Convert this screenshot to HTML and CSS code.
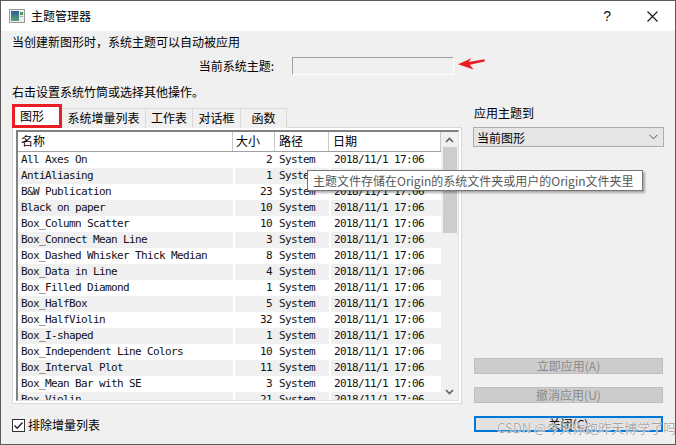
FILE: index.html
```html
<!DOCTYPE html>
<html lang="zh-CN">
<head>
<meta charset="utf-8">
<title>主题管理器</title>
<link rel="stylesheet" href="styles.css">
</head>
<body>
<div class="window">
  <div class="titlebar">
    <svg class="app-icon" width="16" height="14" viewBox="0 0 16 14">
      <defs>
        <linearGradient id="g1" x1="0" y1="0" x2="0" y2="1">
          <stop offset="0" stop-color="#2f5f8f"/>
          <stop offset="1" stop-color="#5aa27a"/>
        </linearGradient>
      </defs>
      <rect x="0.5" y="0.5" width="15" height="13" fill="#ececec" stroke="#9a9a9a"/>
      <rect x="2" y="2" width="8" height="10" fill="url(#g1)"/>
      <rect x="11" y="3" width="3" height="3" fill="#4f9d5a"/>
      <rect x="11" y="7" width="3" height="1" fill="#9ab"/>
    </svg>
    <span class="title">主题管理器</span>
    <span class="help">?</span>
    <svg class="close-x" width="11" height="11" viewBox="0 0 11 11">
      <path d="M0.5 0.5 L10.5 10.5 M10.5 0.5 L0.5 10.5" stroke="#111" stroke-width="1.1" fill="none"/>
    </svg>
  </div>

  <div class="content">
    <div class="line1">当创建新图形时，系统主题可以自动被应用</div>
    <div class="current-row">
      <span class="label">当前系统主题:</span>
      <div class="field"></div>
    </div>
    <div class="line3">右击设置系统竹筒或选择其他操作。</div>

    <div class="main">
      <div class="left">
        <div class="tabs">
          <div class="tab tab-active">图形</div>
          <div class="tab tab-2">系统增量列表</div>
          <div class="tab tab-3">工作表</div>
          <div class="tab tab-4">对话框</div>
          <div class="tab tab-5">函数</div>
        </div>
        <div class="panel">
          <div class="list">
            <div class="table">
              <div class="header">
                <div class="hcell">名称</div>
                <div class="hcell">大小</div>
                <div class="hcell hpath">路径</div>
                <div class="hcell hpath">日期</div>
              </div>
              <div class="row"><span class="c-name">All Axes On</span><span class="c-size">2</span><span class="c-path">System</span><span class="c-date">2018/11/1 17:06</span></div>
              <div class="row"><span class="c-name">AntiAliasing</span><span class="c-size">1</span><span class="c-path">System</span><span class="c-date">2018/11/1 17:06</span></div>
              <div class="row"><span class="c-name">B&amp;W Publication</span><span class="c-size">23</span><span class="c-path">System</span><span class="c-date">2018/11/1 17:06</span></div>
              <div class="row"><span class="c-name">Black on paper</span><span class="c-size">10</span><span class="c-path">System</span><span class="c-date">2018/11/1 17:06</span></div>
              <div class="row"><span class="c-name">Box_Column Scatter</span><span class="c-size">10</span><span class="c-path">System</span><span class="c-date">2018/11/1 17:06</span></div>
              <div class="row"><span class="c-name">Box_Connect Mean Line</span><span class="c-size">3</span><span class="c-path">System</span><span class="c-date">2018/11/1 17:06</span></div>
              <div class="row"><span class="c-name">Box_Dashed Whisker Thick Median</span><span class="c-size">8</span><span class="c-path">System</span><span class="c-date">2018/11/1 17:06</span></div>
              <div class="row"><span class="c-name">Box_Data in Line</span><span class="c-size">4</span><span class="c-path">System</span><span class="c-date">2018/11/1 17:06</span></div>
              <div class="row"><span class="c-name">Box_Filled Diamond</span><span class="c-size">1</span><span class="c-path">System</span><span class="c-date">2018/11/1 17:06</span></div>
              <div class="row"><span class="c-name">Box_HalfBox</span><span class="c-size">5</span><span class="c-path">System</span><span class="c-date">2018/11/1 17:06</span></div>
              <div class="row"><span class="c-name">Box_HalfViolin</span><span class="c-size">32</span><span class="c-path">System</span><span class="c-date">2018/11/1 17:06</span></div>
              <div class="row"><span class="c-name">Box_I-shaped</span><span class="c-size">1</span><span class="c-path">System</span><span class="c-date">2018/11/1 17:06</span></div>
              <div class="row"><span class="c-name">Box_Independent Line Colors</span><span class="c-size">10</span><span class="c-path">System</span><span class="c-date">2018/11/1 17:06</span></div>
              <div class="row"><span class="c-name">Box_Interval Plot</span><span class="c-size">11</span><span class="c-path">System</span><span class="c-date">2018/11/1 17:06</span></div>
              <div class="row"><span class="c-name">Box_Mean Bar with SE</span><span class="c-size">3</span><span class="c-path">System</span><span class="c-date">2018/11/1 17:06</span></div>
              <div class="row"><span class="c-name">Box_Violin</span><span class="c-size">21</span><span class="c-path">System</span><span class="c-date">2018/11/1 17:06</span></div>
            </div>
            <div class="scrollbar">
              <div class="sb-btn sb-up">
                <svg width="9" height="6" viewBox="0 0 9 6"><path d="M1 5 L4.5 1.5 L8 5" stroke="#606060" stroke-width="1.6" fill="none"/></svg>
              </div>
              <div class="sb-thumb"></div>
              <div class="sb-track"></div>
              <div class="sb-btn sb-down">
                <svg width="9" height="6" viewBox="0 0 9 6"><path d="M1 1 L4.5 4.5 L8 1" stroke="#606060" stroke-width="1.6" fill="none"/></svg>
              </div>
            </div>
          </div>
        </div>
        <div class="check-row">
          <span class="checkbox">
            <svg width="11" height="11" viewBox="0 0 11 11"><path d="M1.5 5.5 L4.2 8.3 L9.5 2.5" stroke="#222" stroke-width="1.4" fill="none"/></svg>
          </span>
          <span class="check-label">排除增量列表</span>
        </div>
      </div>

      <div class="right">
        <div class="apply-label">应用主题到</div>
        <div class="dropdown">
          <span>当前图形</span>
          <svg width="9" height="6" viewBox="0 0 9 6"><path d="M0.5 0.8 L4.5 4.8 L8.5 0.8" stroke="#555" stroke-width="1" fill="none"/></svg>
        </div>
        <div class="btn btn-disabled btn-first">立即应用(A)</div>
        <div class="btn btn-disabled">撤消应用(U)</div>
        <div class="btn btn-default">关闭(C)</div>
      </div>
    </div>
  </div>

  <svg class="arrow" width="30" height="15" viewBox="0 0 30 15">
    <path d="M2 8.2 L15.5 2.2 L12.6 6 L28.5 3.2 L28.8 5.6 L13.8 8.8 L17.5 13.6 Z" fill="#ec1c24"/>
  </svg>

  <div class="tooltip">主题文件存储在Origin的系统文件夹或用户的Origin文件夹里</div>
  <div class="watermark">CSDN @今天你跑昨天博学了吗</div>
</div>
</body>
</html>
```

FILE: styles.css
```css
* { box-sizing: border-box; }

html, body {
  margin: 0;
  padding: 0;
  background: #ffffff;
}

body {
  font-family: "Noto Sans CJK SC", "Microsoft YaHei", sans-serif;
  font-size: 12px;
  color: #000;
}

.window {
  position: relative;
  width: 676px;
  height: 445px;
  border: 1px solid #5a5a5a;
  background: #f0f0f0;
  overflow: hidden;
}

/* Title bar */
.titlebar {
  height: 30px;
  background: #ffffff;
  display: flex;
  align-items: center;
}

.app-icon {
  margin-left: 8px;
  flex: none;
}

.title {
  margin-left: 6px;
  font-size: 12px;
  line-height: 16px;
}

.help {
  margin-left: auto;
  font-family: "Liberation Sans", sans-serif;
  font-size: 14px;
  line-height: 16px;
  color: #111;
}

.close-x {
  margin-left: 36px;
  margin-right: 17px;
}

/* Content */
.content {
  padding: 0 11px 12px 11px;
}

.line1 {
  margin-top: 3px;
  line-height: 16px;
  height: 16px;
}

.current-row {
  margin-top: 7px;
  height: 18px;
  display: flex;
  align-items: center;
  padding-left: 186px;
}

.label {
  width: 94px;
  padding-right: 18px;
  text-align: right;
  line-height: 16px;
  white-space: nowrap;
}

.field {
  width: 162px;
  height: 18px;
  border: 1px solid;
  border-color: #a0a0a0 #ffffff #ffffff #a0a0a0;
  background: #f0f0f0;
}

.line3 {
  margin-top: 9px;
  line-height: 16px;
  height: 16px;
}

.main {
  display: flex;
}

.left {
  width: 450px;
  padding-top: 4px;
  display: flex;
  flex-direction: column;
}

/* Tabs */
.tabs {
  display: flex;
  align-items: flex-end;
  height: 24px;
  position: relative;
  z-index: 1;
}

.tab {
  height: 20px;
  line-height: 18px;
  text-align: center;
  background: #f0f0f0;
  border-top: 1px solid #d9d9d9;
  border-right: 1px solid #d9d9d9;
  white-space: nowrap;
}

.tab-active {
  width: 50px;
  height: 24px;
  line-height: 17px;
  text-align: left;
  padding-left: 5px;
  background: #ffffff;
  border: 3px solid #e81e25;
}

.tab-2 { width: 84px; }
.tab-3 { width: 47px; }
.tab-4 { width: 48px; }
.tab-5 { width: 46px; }

/* Panel */
.panel {
  margin-top: -1px;
  height: 277px;
  border: 1px solid #d9d9d9;
  background: #ffffff;
  padding: 2px 2px 0 3px;
}

.list {
  width: 443px;
  height: 271px;
  display: flex;
  border-style: solid;
  border-width: 2px 1px 1px 2px;
  border-color: #828282 #e3e3e3 #e3e3e3 #828282;
  background: #ffffff;
}

.table {
  flex: 1;
  overflow: hidden;
}

.header {
  display: grid;
  grid-template-columns: 215px 42px 54px 112px;
  height: 20px;
  background: #ffffff;
  border-bottom: 1px solid #a0a0a0;
}

.hcell {
  padding-left: 3px;
  line-height: 18px;
  border-right: 1px solid #c8c8c8;
  font-size: 12px;
}

.hpath { padding-left: 4px; }

.row {
  display: grid;
  grid-template-columns: 215px 42px 54px 112px;
  height: 16px;
  line-height: 16px;
  font-family: "DejaVu Sans Mono", "Liberation Mono", monospace;
  font-size: 11px;
  letter-spacing: -0.62px;
  white-space: nowrap;
  background: #ffffff;
  color: #111;
}

.row:nth-child(odd) {
  background: #f0f0f0;
}

.row span { overflow: hidden; }

.c-name { padding-left: 3px; }

.c-size {
  text-align: right;
  padding-right: 3px;
  border-left: 2px solid #ffffff;
}

.c-path { padding-left: 4px; }

.c-date {
  padding-left: 3px;
  border-left: 2px solid #ffffff;
}

/* Scrollbar */
.scrollbar {
  width: 17px;
  background: #f0f0f0;
  display: flex;
  flex-direction: column;
}

.sb-btn {
  height: 16px;
  display: flex;
  align-items: center;
  justify-content: center;
}

.sb-up { height: 15px; }

.sb-thumb {
  height: 86px;
  margin: 0 1px 0 2px;
  background: #cdcdcd;
}

.sb-track { flex: 1; }

/* Checkbox */
.check-row {
  margin-top: 14px;
  height: 14px;
  display: flex;
  align-items: center;
}

.checkbox {
  width: 13px;
  height: 13px;
  border: 1px solid #333333;
  background: #ffffff;
  display: flex;
  align-items: center;
  justify-content: center;
}

.check-label {
  margin-left: 3px;
  line-height: 14px;
}

/* Right column */
.right {
  width: 190px;
  margin-left: 12px;
  display: flex;
  flex-direction: column;
}

.apply-label {
  margin-top: 5px;
  line-height: 16px;
  height: 16px;
}

.dropdown {
  margin-top: 6px;
  margin-left: -1px;
  height: 20px;
  border: 1px solid #adadad;
  background: #e5e5e5;
  display: flex;
  align-items: center;
  justify-content: space-between;
  padding: 0 5px 0 3px;
}

.btn {
  width: 189px;
  height: 16px;
  line-height: 14px;
  text-align: center;
  border: 1px solid #bfbfbf;
  background: #cccccc;
  margin-top: 13px;
  font-size: 12px;
}

.btn-first { margin-top: auto; }

.btn-disabled { color: #8a8a8a; }

.btn-default {
  border: 2px solid #0078d7;
  background: #e1e1e1;
  line-height: 12px;
  color: #000;
}

/* Overlays */
.arrow {
  position: absolute;
  left: 455px;
  top: 55px;
}

.tooltip {
  position: absolute;
  left: 306px;
  top: 169px;
  width: 336px;
  height: 21px;
  border: 1px solid #767676;
  background: #ffffff;
  color: #575757;
  font-size: 12px;
  line-height: 19px;
  padding-left: 5px;
  white-space: nowrap;
  box-shadow: 2px 2px 2px rgba(0, 0, 0, 0.3);
}

.watermark {
  position: absolute;
  left: 496px;
  top: 419px;
  font-size: 13px;
  line-height: 16px;
  color: rgba(140, 140, 140, 0.75);
  text-shadow: 0 0 1px #ffffff, 0 0 1px #ffffff;
  white-space: nowrap;
}
```
